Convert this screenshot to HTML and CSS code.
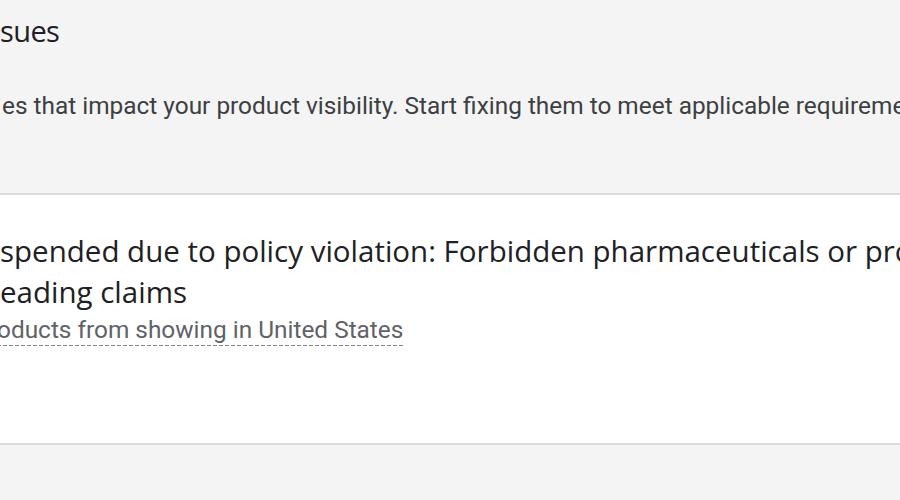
FILE: index.html
```html
<!DOCTYPE html>
<html lang="en">
<head>
<meta charset="utf-8">
<title>Issues</title>
<link rel="stylesheet" href="styles.css">
</head>
<body>
<main class="page">
  <section class="intro">
    <h1 class="intro-title">sues</h1>
    <p class="intro-text">es that impact your product visibility. Start fixing them to meet applicable requirements.</p>
  </section>
  <section class="issue-card">
    <h2 class="issue-title"><span class="line">spended due to policy violation: Forbidden pharmaceuticals or products with</span><span class="line">eading claims</span></h2>
    <p class="issue-impact"><span class="impact-link">oducts from showing in United States</span></p>
  </section>
</main>
</body>
</html>
```
FILE: styles.css
```css
html, body {
  margin: 0;
  padding: 0;
  width: 900px;
  height: 500px;
  overflow: hidden;
  background: #f4f4f4;
}

.page {
  display: flex;
  flex-direction: column;
  white-space: nowrap;
}

.intro {
  display: flex;
  flex-direction: column;
  height: 195px;
  box-sizing: border-box;
  padding-top: 13px;
  border-bottom: 2px solid #dadce0;
}

.intro-title {
  margin: 0;
  font-family: "Open Sans", sans-serif;
  font-weight: 400;
  font-size: 29px;
  line-height: 36px;
  letter-spacing: -0.6px;
  color: #202124;
}

.intro-text {
  margin: 43px 0 0 2px;
  font-family: Roboto, "Liberation Sans", sans-serif;
  font-size: 24.4px;
  line-height: 28px;
  color: #3c4043;
}

.issue-card {
  display: flex;
  flex-direction: column;
  height: 250px;
  box-sizing: border-box;
  background: #ffffff;
  padding-top: 35px;
  border-bottom: 2px solid #dadce0;
}

.issue-title {
  margin: 0;
  display: flex;
  flex-direction: column;
  font-family: "Open Sans", sans-serif;
  font-weight: 400;
  font-size: 29.5px;
  line-height: 41px;
  color: #202124;
}

.issue-impact {
  margin: 2px 0 0;
  font-family: Roboto, "Liberation Sans", sans-serif;
  font-size: 24.4px;
  line-height: 32px;
  color: #5f6368;
}

.impact-link {
  display: inline-block;
  margin-left: -3px;
  background-image: linear-gradient(to right, #80868b 65%, transparent 65%);
  background-size: 6px 1px;
  background-repeat: repeat-x;
  background-position: 0 100%;
}
```
